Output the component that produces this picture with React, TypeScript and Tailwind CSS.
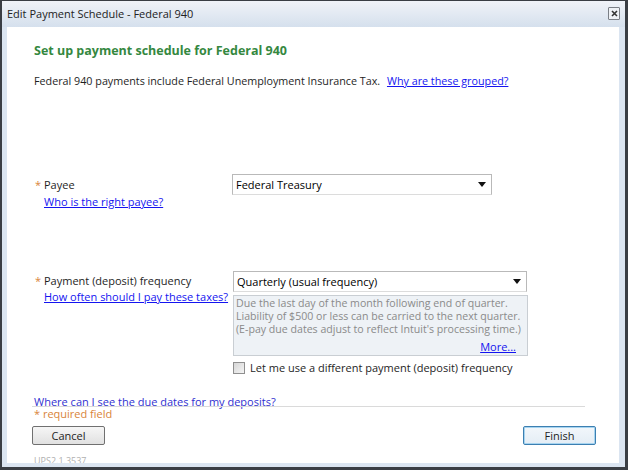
import React from "react";

const font = { fontFamily: '"Open Sans", "Noto Sans", sans-serif' };

function Dropdown({ value, width }: { value: string; width: string }) {
  return (
    <div
      className={`flex h-[21px] items-center justify-between border border-[#b9b9b9] border-b-[#dcdcdc] bg-white pl-[3px] pr-[5px] text-[11px] text-black ${width}`}
    >
      <span>{value}</span>
      <svg width="8" height="5" viewBox="0 0 8 5">
        <path d="M0 0h8L4 5z" fill="#111" />
      </svg>
    </div>
  );
}

function Asterisk() {
  return <span className="w-[10px] pl-[1px] text-[#d9843a]">*</span>;
}

export default function App() {
  return (
    <div
      className="h-[470px] w-[628px] overflow-hidden bg-[#3a3e44] pt-[1px] pl-[2px] pr-[3px] pb-[3px]"
      style={font}
    >
      <div className="flex h-full w-full flex-col bg-[#dbe5f1]">
        {/* title bar */}
        <div className="flex h-[26px] shrink-0 items-center justify-between bg-gradient-to-b from-[#f0f3f8] to-[#d5e0ed] pl-[5px] pr-[5px]">
          <span className="text-[11px] text-[#222]">
            Edit Payment Schedule - Federal 940
          </span>
          <div className="mt-[-2px] flex h-[13px] w-[12px] items-center justify-center rounded-[1px] border border-[#7a7f86] bg-[#eef1f5]">
            <svg width="7" height="7" viewBox="0 0 7 7">
              <path d="M1 1l5 5M6 1l-5 5" stroke="#333" strokeWidth="1.6" />
            </svg>
          </div>
        </div>

        {/* content */}
        <div className="ml-[5px] mr-[6px] mb-[4px] flex min-h-0 flex-1 flex-col overflow-hidden bg-white pl-[27px] pr-[34px] text-[11px] leading-[15px] text-[#1e1e1e] [&>*]:shrink-0">
          <h1 className="mt-[16px] text-[12.5px] font-bold leading-[16px] text-[#35883f]">
            Set up payment schedule for Federal 940
          </h1>
          <p className="mt-[15px] text-[10.75px]">
            Federal 940 payments include Federal Unemployment Insurance Tax.{" "}
            <a className="ml-[4px] text-[#1414f0] underline">Why are these grouped?</a>
          </p>

          {/* Payee */}
          <div className="mt-[85px] flex h-[97px]">
            <div className="w-[198px] pt-[2px] leading-[17px]">
              <div className="flex">
                <Asterisk />
                <span>Payee</span>
              </div>
              <a className="ml-[10px] text-[#1414f0] underline">Who is the right payee?</a>
            </div>
            <Dropdown value="Federal Treasury" width="w-[260px]" />
          </div>

          {/* Frequency */}
          <div className="flex">
            <div className="w-[198px] pt-[2px] leading-[16px]">
              <div className="flex">
                <Asterisk />
                <span>Payment (deposit) frequency</span>
              </div>
              <a className="ml-[10px] whitespace-nowrap text-[#1414f0] underline">
                How often should I pay these taxes?
              </a>
            </div>
            <div className="ml-[1px] flex flex-col">
              <Dropdown value="Quarterly (usual frequency)" width="w-[294px]" />
              <div className="mt-[3px] flex h-[61px] w-[295px] flex-col whitespace-nowrap border border-[#c9ced3] bg-[#eef2f6] px-[2px] pt-[1px] text-[10.6px] leading-[13px] text-[#8a8a8a]">
                <span>Due the last day of the month following end of quarter.</span>
                <span>Liability of $500 or less can be carried to the next quarter.</span>
                <span>(E-pay due dates adjust to reflect Intuit's processing time.)</span>
                <a className="mr-[9px] mt-[4px] self-end text-[11px] text-[#1414f0] underline">More...</a>
              </div>
              <label className="mt-[4px] flex items-center gap-[5px]">
                <span className="h-[12px] w-[12px] border border-[#8f8f8f] bg-gradient-to-br from-[#d6d6d6] to-[#f4f4f4]" />
                <span>Let me use a different payment (deposit) frequency</span>
              </label>
            </div>
          </div>

          <div className="mt-[21px] h-[10px] leading-[12px]">
            <a className="text-[#3030d0]">Where can I see the due dates for my deposits?</a>
          </div>
          <div className="-ml-[2px] border-t border-[#dadada]" />
          <span className="leading-[14px] text-[#d9843a]">* required field</span>

          <div className="mt-[5px] flex justify-between">
            <button className="-ml-[2px] h-[19px] w-[73px] rounded-[2px] border border-[#707070] bg-gradient-to-b from-[#f6f6f6] to-[#e1e1e1] text-[11px] leading-[15px] text-[#1e1e1e]">
              Cancel
            </button>
            <button className="-mr-[11px] h-[19px] w-[73px] rounded-[2px] border border-[#3c7fb1] bg-gradient-to-b from-[#f2f7fb] to-[#e4edf5] text-[11px] leading-[15px] text-[#1e1e1e] shadow-[inset_0_0_0_1px_#a6d4f0]">
              Finish
            </button>
          </div>
          <span className="mt-[10px] text-[9px] leading-[12px] text-[#b0b0b0]">UPS2.1.3537</span>
        </div>
      </div>
    </div>
  );
}
